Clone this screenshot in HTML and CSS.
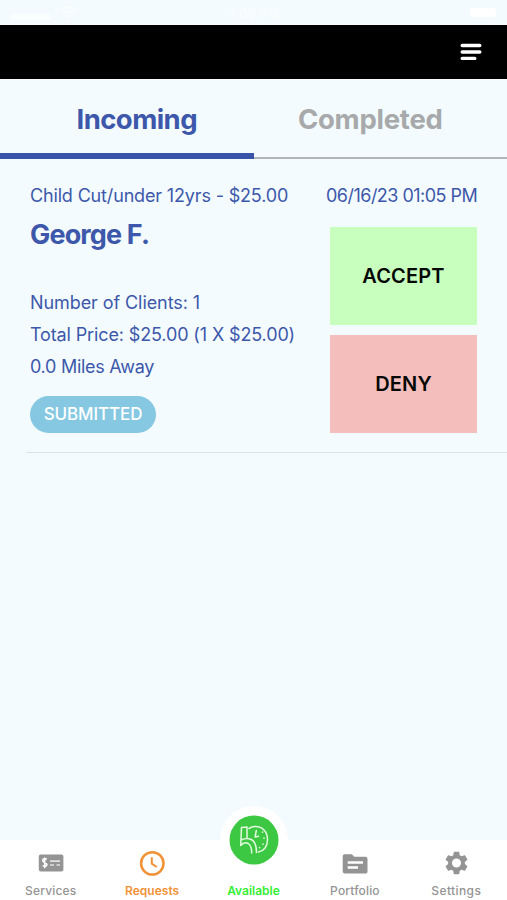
FILE: index.html
```html
<!DOCTYPE html>
<html lang="en">
<head>
<meta charset="utf-8">
<title>Requests</title>
<link rel="stylesheet" href="styles.css">
</head>
<body>
<div class="app">
  <div class="status">
    <span class="carrier"></span>
    <svg class="wifi" width="18" height="13" viewBox="0 0 18 13"><path d="M1 5Q9-3 17 5M4 8q5-5 10 0M7 11q2-2 4 0" fill="none" stroke="#fff" stroke-width="2"/></svg>
    <span class="time">1:05 PM</span>
    <span class="battery"></span>
  </div>
  <header class="header">
    <svg width="22" height="18" viewBox="0 0 22 18"><path d="M2.200 2.500h17.600M2.200 9h17.600M2.200 15.400h12.600" stroke="#fff" stroke-width="3.400" stroke-linecap="round"/></svg>
  </header>
  <nav class="tabs">
    <div class="tab active"><span>Incoming</span></div>
    <div class="tab"><span>Completed</span></div>
  </nav>
  <main class="list">
    <article class="request">
      <div class="info">
        <div class="line service"><span>Child Cut/under 12yrs - $25.00</span></div>
        <h2 class="name"><span>George F.</span></h2>
        <div class="line clients"><span>Number of Clients: 1</span></div>
        <div class="line price"><span>Total Price: $25.00 (1 X $25.00)</span></div>
        <div class="line miles"><span>0.0 Miles Away</span></div>
        <div class="badge"><span>SUBMITTED</span></div>
      </div>
      <div class="actions">
        <div class="line date"><span>06/16/23 01:05 PM</span></div>
        <button class="btn accept"><span>ACCEPT</span></button>
        <button class="btn deny"><span>DENY</span></button>
      </div>
    </article>
  </main>
  <nav class="bottom">
    <div class="item">
      <svg width="26" height="26" viewBox="0 0 26 26"><rect x=".8" y="4.500" width="24.600" height="17" rx="2" fill="#949494"/><path d="M8.800 9.400C7.500 8.300 4.700 8.500 4.700 10.500c0 2.400 4.200 1.700 4.200 4.100 0 1.900-2.700 2.200-4.300.9M6.700 7.600v10.600" fill="none" stroke="#fff" stroke-width="1.600"/><path d="M12 11.100h10M12 15h4M18.500 15H22" stroke="#e0e0e0" stroke-width="1.600"/></svg>
      <span class="label services">Services</span>
    </div>
    <div class="item orange">
      <svg width="26" height="26" viewBox="0 0 26 26"><circle cx="13.300" cy="13.400" r="11.200" fill="none" stroke="#f19237" stroke-width="2.500"/><path d="M12.800 7.200v6.500l5 3.300" fill="none" stroke="#f19237" stroke-width="2"/></svg>
      <span class="label requests">Requests</span>
    </div>
    <div class="item green">
      <div class="halo"><svg width="50" height="50" viewBox="0 0 50 50"><circle cx="25" cy="25" r="24.500" fill="#3dc843"/><g fill="none" stroke="#e3f9df" stroke-width="1.500" stroke-linecap="round" stroke-linejoin="round"><path d="M12.500 12.500l5.500-.5v11M12.500 12.500l-.8 18M12 25c3-1.500 6-2 9-1 5 1.500 6.500 6 6.500 13.500M11.700 30.500c2.500-3 5-3.500 7.500-2 3 2 3.500 5 3.500 9.500M20 13.500c2-1.300 3.600-1.800 5.500-1.900 8-.4 13 5.200 13 13.200 0 7-4 11.500-9 12.200"/><path d="M27.300 15.500l-1.200 6.500 3.500-.8"/><path d="M33.500 17v.2M35 23v.2M34 29v.2M30.500 32.500v.2" stroke-width="1.600"/></g></svg></div>
      <span class="label available">Available</span>
    </div>
    <div class="item">
      <svg width="26" height="26" viewBox="0 0 26 26"><path d="M2.700 4.200h7.200l2.400 2.600h11c1.300 0 2.200.9 2.200 2.100v12.500c0 1.300-.9 2.100-2.200 2.100H2.800C1.500 23.500.7 22.600.7 21.300V6.300c0-1.200.8-2.100 2-2.100zM5.700 11.300v2.400h15.300v-2.400zM5.700 16.300v2.400h10.300v-2.400z" fill="#949494" fill-rule="evenodd"/></svg>
      <span class="label portfolio">Portfolio</span>
    </div>
    <div class="item">
      <svg width="29" height="28" viewBox="0 0 24 24"><path fill="#949494" d="M19.140 12.940c.04-.3.06-.61.06-.94 0-.32-.02-.64-.07-.94l2.030-1.580a.49.490 0 0 0 .12-.61l-1.920-3.320a.488.488 0 0 0-.59-.22l-2.390.96c-.5-.38-1.030-.7-1.620-.94l-.36-2.540a.484.484 0 0 0-.48-.41h-3.840c-.24 0-.43.17-.47.410l-.36 2.540c-.59.240-1.130.570-1.620.940l-2.390-.96c-.22-.08-.47 0-.59.220L2.740 8.870c-.12.210-.08.470.12.610l2.030 1.580c-.05.3-.09.630-.09.940s.02.640.07.940l-2.030 1.580a.49.490 0 0 0-.12.610l1.920 3.320c.12.220.37.290.59.220l2.390-.96c.5.380 1.030.7 1.620.940l.36 2.540c.05.240.24.410.48.410h3.840c.24 0 .44-.17.47-.41l.36-2.540c.59-.24 1.130-.56 1.620-.94l2.390.96c.22.080.47 0 .59-.22l1.920-3.320c.12-.22.07-.47-.12-.61zM12 15.900a3.900 3.900 0 1 1 0-7.800 3.900 3.900 0 0 1 0 7.800z"/></svg>
      <span class="label settings">Settings</span>
    </div>
  </nav>
</div>
</body>
</html>
```
FILE: styles.css
```css
* { box-sizing: border-box; }
body { margin: 0; font-family: Inter, "Liberation Sans", sans-serif; background: #f3fbfe; color: #3d58aa; }
.app { width: 507px; height: 900px; display: flex; flex-direction: column; overflow: hidden; }
.status { height: 25px; flex: none; display: flex; align-items: center; padding: 0 11px; color: #fff; }
.carrier { width: 40px; height: 6px; margin-top: 9px; background: #f9feff; border-radius: 2px; }
.wifi { margin-left: 9px; opacity: .6; }
.time { margin-left: 151px; font-size: 13px; font-weight: 600; opacity: .6; }
.battery { width: 26px; height: 9px; margin-left: auto; border-radius: 3px; background: #fff; }
.header { height: 54px; flex: none; background: #000; display: flex; justify-content: flex-end; align-items: center; padding-right: 25px; }
.tabs { height: 80px; flex: none; display: flex; }
.tab { flex: 1; border-bottom: 2px solid #b1b5b8; padding-right: 20px; text-align: center; font-size: 27.500px; line-height: 80px; font-weight: 700; letter-spacing: -.25px; color: #a7a9aa; }
.tab.active { color: #3d58aa; border-bottom: 6px solid #3854a8; padding: 0 0 0 20px; letter-spacing: -.55px; }
.list { flex: 1; }
.request { display: flex; justify-content: space-between; height: 294px; margin-left: 26px; padding: 26px 29px 0 4px; border-bottom: 1px solid #dbe2e5; }
.line { font-size: 18px; line-height: 22px; white-space: nowrap; }
.service { letter-spacing: -.16px; }
.name { margin: 11px 0 0; font-size: 27px; line-height: 34px; font-weight: 700; letter-spacing: -.85px; }
.clients { margin-top: 40px; letter-spacing: -.08px; }
.price, .miles { margin-top: 10px; }
.price { letter-spacing: -.13px; }
.miles { letter-spacing: -.28px; }
.date { letter-spacing: -.52px; }
.badge { width: 126px; height: 37px; margin-top: 18px; border-radius: 19px; background: #86c8e1; color: #fff; font-size: 17px; font-weight: 500; letter-spacing: -.1px; line-height: 37px; text-align: center; white-space: nowrap; }
.actions { width: 152px; display: flex; flex-direction: column; }
.btn { width: 147px; height: 98px; margin: 10px 0 0 4px; border: 0; padding: 0; font: 600 20px/98px Inter, sans-serif; letter-spacing: .15px; color: #050805; }
.accept { margin-top: 20px; background: #c8ffbe; }
.deny { background: #f4bebc; }
.bottom { height: 60px; flex: none; display: flex; background: #fff; color: #949494; }
.item { flex: 1; display: flex; flex-direction: column; align-items: center; justify-content: space-between; padding: 10px 0 2px; min-width: 0; }
.item > svg { flex: none; }
.item:last-child { padding-top: 9px; }
.label { font-size: 12px; line-height: 14px; font-weight: 500; letter-spacing: .15px; }
.settings { letter-spacing: .4px; }
.orange { color: #f19237; }
.green { color: #35ee35; }
.orange .label, .green .label { font-weight: 600; letter-spacing: 0; }
.halo { width: 68px; height: 68px; margin-top: -44px; padding: 9px; border-radius: 50%; background: #fff; }
.halo svg { display: block; }
```
